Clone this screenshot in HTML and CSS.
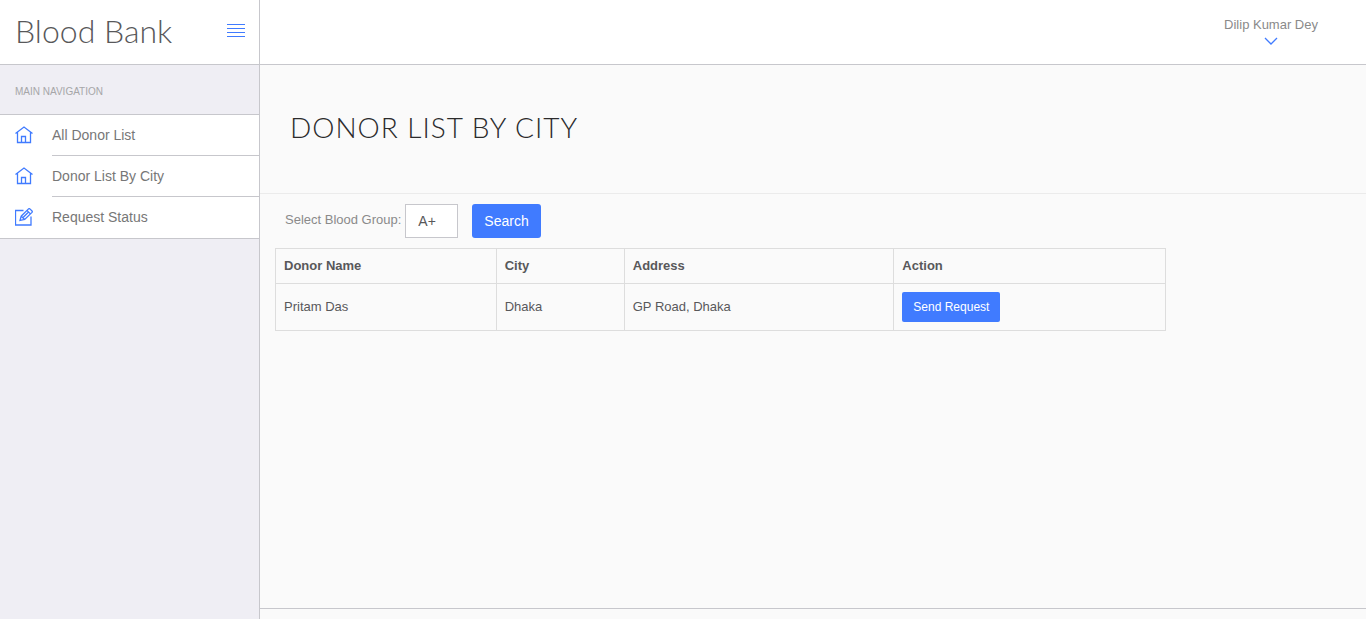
FILE: index.html
```html
<!DOCTYPE html>
<html lang="en">
<head>
<meta charset="utf-8">
<meta name="viewport" content="width=device-width, initial-scale=1">
<title>Blood Bank - Donor List By City</title>
<link rel="stylesheet" href="styles.css">
</head>
<body>
<div class="layout">
  <aside class="sidebar">
    <div class="brand">
      <a class="brand-name" href="#">Blood Bank</a>
      <button class="menu-toggle" type="button" aria-label="Toggle menu">
        <svg width="18" height="14" viewBox="0 0 18 14" shape-rendering="crispEdges"><path d="M0 .5h18M0 4.5h18M0 8.5h18M0 12.5h18"/></svg>
      </button>
    </div>
    <nav aria-labelledby="nav-title">
      <h2 class="nav-title" id="nav-title">MAIN NAVIGATION</h2>
      <ul class="nav-list">
        <li class="nav-item">
          <svg class="icon" width="18" height="18" viewBox="0 0 18 18"><path d="M.5 7.500 9 1l8.500 6.500M2.500 6.500v10h13v-10M6.500 16.500v-6h4v6"/></svg>
          <a class="nav-link" href="#">All Donor List</a>
        </li>
        <li class="nav-item">
          <svg class="icon" width="18" height="18" viewBox="0 0 18 18"><path d="M.5 7.500 9 1l8.500 6.500M2.500 6.500v10h13v-10M6.500 16.500v-6h4v6"/></svg>
          <a class="nav-link" href="#">Donor List By City</a>
        </li>
        <li class="nav-item">
          <svg class="icon" width="18" height="18" viewBox="0 0 18 18"><path d="M8.500 2.500h-8v14.500h15.500V8.500M5 12.500l1.200-4.300 7.300-7.300q.7-.6 1.400 0l2.100 2.100q.6.700 0 1.400l-7.300 7.100ZM6.200 8.200l3.500 3.300M12 2.500l3.400 3.400M7.800 9.800l6-6"/></svg>
          <a class="nav-link" href="#">Request Status</a>
        </li>
      </ul>
    </nav>
  </aside>
  <div class="page">
    <header class="topbar">
      <button class="user-menu" type="button">
        <span>Dilip Kumar Dey</span>
        <svg class="icon" width="14" height="8" viewBox="0 0 14 8"><path d="m1 1 6 6 6-6"/></svg>
      </button>
    </header>
    <main class="content">
      <div class="page-heading"><h1 class="page-title">DONOR LIST BY CITY</h1></div>
      <div class="panel">
        <form class="search">
          <label class="search-label" for="group">Select Blood Group:</label>
          <select class="search-select" id="group"><option>A+</option></select>
          <button class="btn btn-search" type="button">Search</button>
        </form>
        <table class="donors">
          <colgroup><col class="col-name"><col class="col-city"><col class="col-address"><col></colgroup>
          <thead><tr><th>Donor Name</th><th>City</th><th>Address</th><th>Action</th></tr></thead>
          <tbody><tr><td>Pritam Das</td><td>Dhaka</td><td>GP Road, Dhaka</td><td><button class="btn btn-small" type="button">Send Request</button></td></tr></tbody>
        </table>
      </div>
    </main>
    <footer class="footer"></footer>
  </div>
</div>
</body>
</html>
```
FILE: styles.css
```css
* { box-sizing: border-box; }

body {
  margin: 0;
  background: #fafafa;
  color: #58585a;
  font: 13px/18px "Liberation Sans", Arial, sans-serif;
}

button, select { font-family: inherit; }

svg {
  display: block;
  fill: none;
  stroke: #407bff;
}

.icon { stroke-width: 1.3; }

.layout {
  display: grid;
  grid-template-columns: 260px 1fr;
  min-height: 100vh;
}

.sidebar {
  background: #efeef4;
  border-right: 1px solid #c7c7cc;
}

.brand {
  display: flex;
  align-items: center;
  justify-content: space-between;
  height: 65px;
  padding: 0 14px 2px 15px;
  background: #fff;
  border-bottom: 1px solid #c7c7cc;
}

.brand-name {
  color: #58585a;
  font: 300 32px/40px Lato, sans-serif;
  text-decoration: none;
}

.menu-toggle {
  padding: 0;
  border: 0;
  background: none;
}

.nav-title {
  margin: 0;
  padding: 18px 15px 14px;
  color: #a6a6a8;
  font-size: 10px;
  font-weight: 400;
  line-height: 17px;
}

.nav-list {
  margin: 0;
  padding: 0;
  list-style: none;
  background: #fff;
  border: solid #c7c7cc;
  border-width: 1px 0;
}

.nav-item {
  display: flex;
  align-items: flex-start;
  gap: 19px;
  padding-left: 15px;
}

.nav-item .icon { margin-top: 11px; }

.nav-link {
  flex: 1;
  padding: 10px 0;
  border-bottom: 1px solid #c7c7cc;
  color: #777;
  font-size: 14px;
  line-height: 20px;
  text-decoration: none;
}

.nav-item:last-child .nav-link { border-bottom-color: transparent; }

.page {
  display: flex;
  flex-direction: column;
  min-width: 0;
}

.topbar {
  display: flex;
  justify-content: flex-end;
  align-items: flex-start;
  height: 65px;
  padding: 16px 48px 0;
  background: #fff;
  border-bottom: 1px solid #c7c7cc;
}

.user-menu {
  display: flex;
  flex-direction: column;
  align-items: center;
  gap: 3px;
  padding: 0;
  border: 0;
  background: none;
  color: #8a8a8a;
  font-size: 13px;
  line-height: 18px;
}

.content { flex: 1; }

.page-heading {
  padding: 42px 30px 46px;
  border-bottom: 1px solid #ebebeb;
}

.page-title {
  margin: 0;
  color: #2b2b2c;
  font: 300 28px/40px Lato, sans-serif;
  letter-spacing: 1px;
}

.panel {
  width: 83.25%;
  padding: 10px 15px;
}

.search {
  display: flex;
  align-items: center;
  padding-left: 10px;
}

.search-label {
  color: #8a8a8a;
  padding-bottom: 3px;
}

.search-select {
  appearance: none;
  width: 53px;
  height: 34px;
  margin: 0 14px 0 4px;
  padding: 0 12px;
  background: #fff;
  border: 1px solid #c7c7cc;
  border-radius: 0;
  color: #58585a;
  font-size: 14px;
}

.btn {
  border: 0;
  border-radius: 3px;
  background: #407bff;
  color: #fff;
}

.btn-search {
  height: 34px;
  padding: 0 12px;
  font-size: 14px;
}

.btn-small {
  display: block;
  height: 30px;
  padding: 0 11px;
  border-radius: 2px;
  font-size: 12px;
}

.donors {
  width: 100%;
  margin-top: 10px;
  border-collapse: collapse;
  table-layout: fixed;
}

.col-name { width: 24.8%; }
.col-city { width: 14.4%; }
.col-address { width: 30.3%; }

.donors th, .donors td {
  padding: 8px;
  border: 1px solid #ddd;
  text-align: left;
}

.footer {
  height: 11px;
  border-top: 1px solid #c7c7cc;
}
```
